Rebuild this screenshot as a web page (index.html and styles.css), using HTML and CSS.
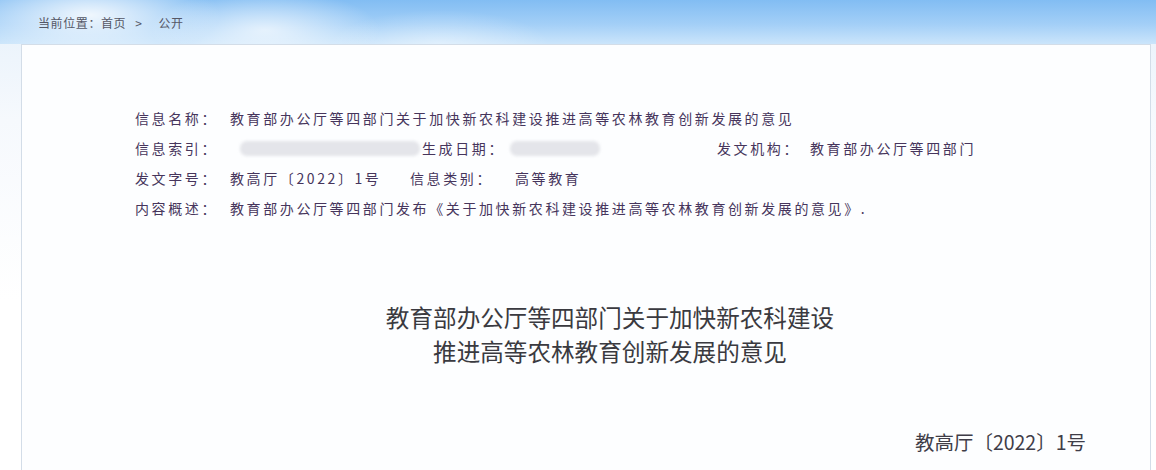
FILE: index.html
```html
<!DOCTYPE html>
<html lang="zh-CN">
<head>
<meta charset="utf-8">
<title>信息公开</title>
<link rel="stylesheet" href="styles.css">
</head>
<body>
<div class="page">
  <div class="header">
    <div class="cloud c1"></div>
    <div class="cloud c2"></div>
    <div class="cloud c3"></div>
    <div class="crumb">
      <span>当前位置：首页</span>
      <span class="sep">&gt;</span>
      <span>公开</span>
    </div>
  </div>
  <div class="card">
    <div class="meta">
      <div class="row">
        <span class="lab w95">信息名称：</span>
        <span class="val">教育部办公厅等四部门关于加快新农科建设推进高等农林教育创新发展的意见</span>
      </div>
      <div class="row">
        <span class="lab w95">信息索引：</span>
        <span class="blur b1"></span>
        <span class="lab w88">生成日期：</span>
        <span class="blur b2"></span>
        <span class="lab w93">发文机构：</span>
        <span class="val">教育部办公厅等四部门</span>
      </div>
      <div class="row">
        <span class="lab w95">发文字号：</span>
        <span class="val w180">教高厅〔2022〕1号</span>
        <span class="lab w105">信息类别：</span>
        <span class="val">高等教育</span>
      </div>
      <div class="row">
        <span class="lab w95">内容概述：</span>
        <span class="val">教育部办公厅等四部门发布《关于加快新农科建设推进高等农林教育创新发展的意见》.</span>
      </div>
    </div>
    <h1 class="title">教育部办公厅等四部门关于加快新农科建设<br>推进高等农林教育创新发展的意见</h1>
    <div class="docno">教高厅〔2022〕1号</div>
  </div>
</div>
</body>
</html>
```

FILE: styles.css
```css
html, body {
  margin: 0;
  padding: 0;
  background: #ffffff;
}
.page {
  width: 1156px;
  height: 470px;
  overflow: hidden;
  background: linear-gradient(to bottom, #e6f1fb 0px, #f6f9fd 120px, #ffffff 300px);
  font-family: "Noto Sans CJK SC", "Noto Sans", sans-serif;
}
.header {
  position: relative;
  height: 44px;
  background: linear-gradient(to bottom, #82bdf3 0%, #a3cff7 55%, #cbe5fb 100%);
  overflow: hidden;
}
.cloud {
  position: absolute;
  border-radius: 50%;
  background: radial-gradient(closest-side, rgba(255,255,255,0.85), rgba(255,255,255,0));
}
.c1 { left: -40px; top: -30px; width: 260px; height: 90px; }
.c2 { left: 150px; top: -10px; width: 230px; height: 80px; opacity: 0.8; }
.c3 { left: 330px; top: 10px; width: 220px; height: 70px; opacity: 0.5; }
.crumb {
  position: relative;
  display: flex;
  align-items: center;
  height: 44px;
  padding-left: 38px;
  font-size: 12px;
  color: #555766;
  letter-spacing: 0.6px;
}
.crumb .sep {
  margin: 0 16px 0 9px;
}
.card {
  margin-left: 21px;
  margin-right: 5px;
  height: 440px;
  background: #fdfeff;
  border: 1px solid #d3dde8;
  border-bottom: none;
  box-sizing: border-box;
  display: flex;
  flex-direction: column;
}
.meta {
  padding: 58px 0 0 113px;
}
.row {
  display: flex;
  align-items: center;
  height: 30px;
  font-size: 14px;
  letter-spacing: 2.6px;
  color: #46355c;
  white-space: nowrap;
}
.lab, .val {
  flex: none;
}
.w95 { width: 95px; }
.w88 { width: 88px; }
.w93 { width: 93px; }
.w105 { width: 105px; }
.w180 { width: 180px; }
.blur {
  flex: none;
  height: 15px;
  background: #e4e5ea;
  border-radius: 7px;
  filter: blur(1.5px);
}
.b1 { width: 180px; margin-left: 10px; margin-right: 2px; }
.b2 { width: 90px; margin-right: 117px; }
.title {
  margin: 77px 0 0 0;
  font-size: 23.6px;
  font-weight: normal;
  line-height: 34px;
  text-align: center;
  color: #3a3a40;
  padding-left: 48px;
}
.docno {
  margin-top: 59px;
  align-self: flex-end;
  margin-right: 64px;
  font-size: 19.5px;
  color: #3f3d48;
}
```
